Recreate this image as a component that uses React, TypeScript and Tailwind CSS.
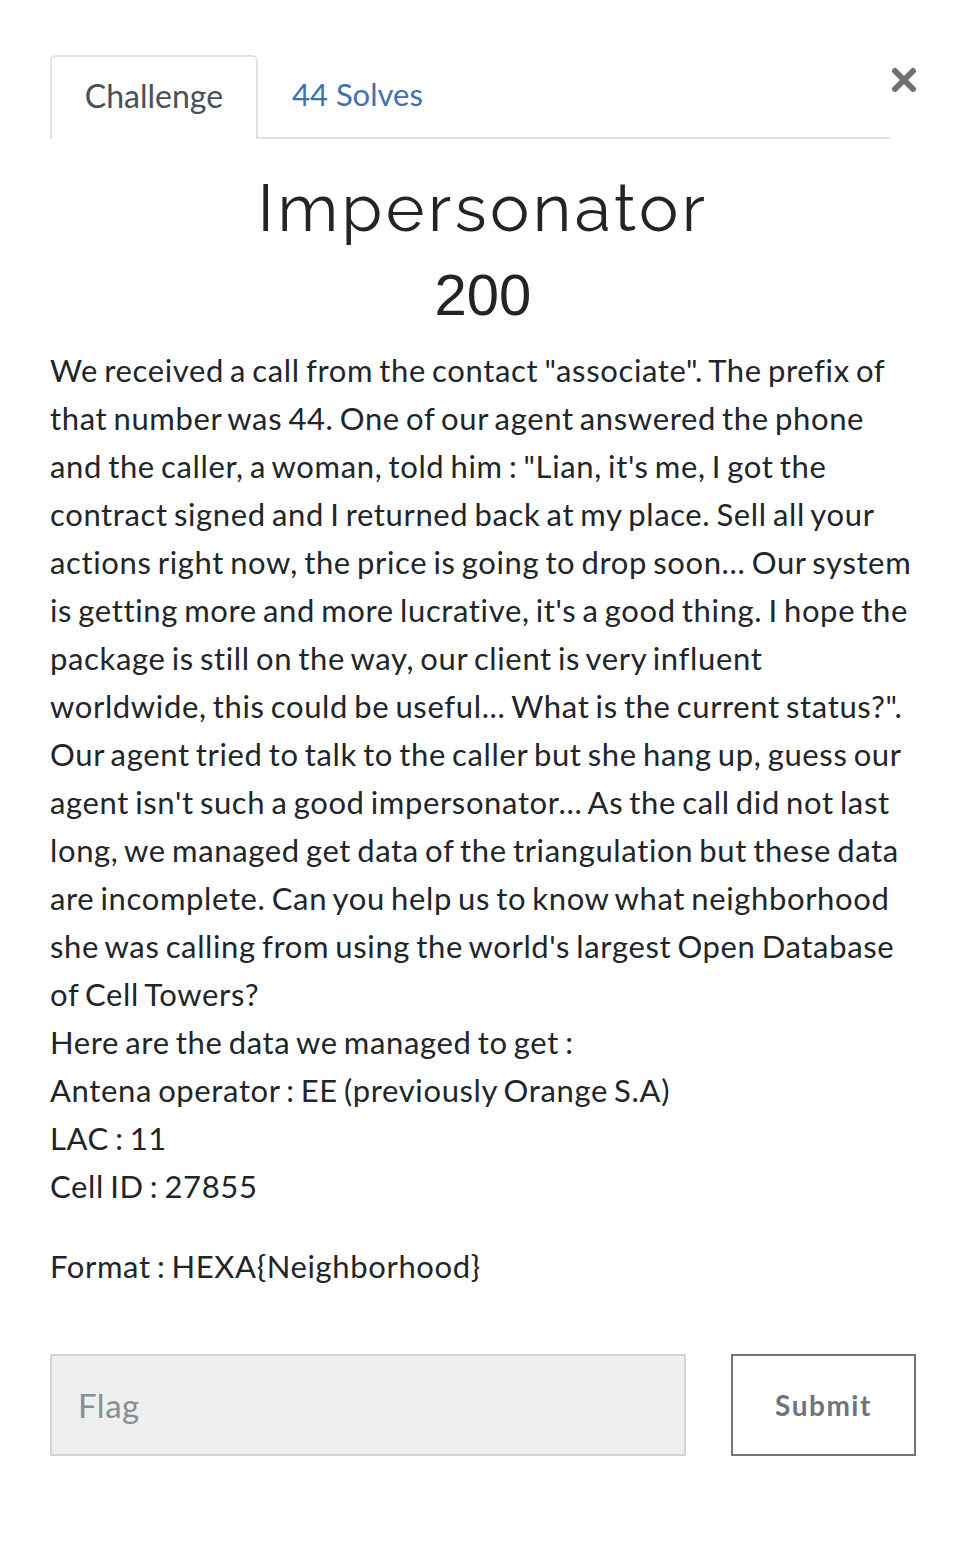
import { X } from "lucide-react";

const lines = [
  'We received a call from the contact "associate". The prefix of',
  "that number was 44. One of our agent answered the phone",
  'and the caller, a woman, told him : "Lian, it\'s me, I got the',
  "contract signed and I returned back at my place. Sell all your",
  "actions right now, the price is going to drop soon... Our system",
  "is getting more and more lucrative, it's a good thing. I hope the",
  "package is still on the way, our client is very influent",
  'worldwide, this could be useful... What is the current status?".',
  "Our agent tried to talk to the caller but she hang up, guess our",
  "agent isn't such a good impersonator... As the call did not last",
  "long, we managed get data of the triangulation but these data",
  "are incomplete. Can you help us to know what neighborhood",
  "she was calling from using the world's largest Open Database",
  "of Cell Towers?",
  "Here are the data we managed to get :",
  "Antena operator : EE (previously Orange S.A)",
  "LAC : 11",
  "Cell ID : 27855",
];

export default function App() {
  return (
    <div className="min-h-screen bg-white pl-[50px] pr-[50px] pt-[55px] font-['Lato','Noto_Sans',sans-serif] text-[#212529]">
      {/* 탭 + 닫기 */}
      <div className="flex items-start">
        <div className="flex w-[840px] shrink-0 border-b-2 border-[#dee2e6]">
          <div className="-mb-[2px] flex h-[84px] w-[208px] items-center justify-center rounded-t-md border-2 border-b-0 border-[#dee2e6] bg-white pb-1 text-[32px] text-[#495057]">
            Challenge
          </div>
          <div className="flex h-[82px] items-center px-[34px] pb-1 text-[31px] text-[#3e72ad]">
            44 Solves
          </div>
        </div>
        <button className="-ml-[4px] mt-[7px] shrink-0 text-[#6f6f6f]" aria-label="close">
          <X size={36} strokeWidth={4} />
        </button>
      </div>

      {/* 제목 + 점수 */}
      <h2 className="mt-[31px] text-center font-['Raleway','Lato',sans-serif] text-[66px] leading-[76px] tracking-[3.5px] font-normal">
        Impersonator
      </h2>
      <h3 className="mt-[14px] text-center font-['Liberation_Sans',Arial,sans-serif] text-[58px] leading-[70px]">
        200
      </h3>

      {/* 본문 */}
      <div className="mt-[16px] text-[31px] leading-[48px] tracking-[0.64px] [word-spacing:-2.4px]">
        <p>
          {lines.map((line, i) => (
            <span key={i} className="block whitespace-nowrap">
              {line}
            </span>
          ))}
        </p>
        <p className="mt-[32px]">Format : HEXA{"{"}Neighborhood{"}"}</p>
      </div>

      {/* 플래그 입력 */}
      <div className="mt-[64px] flex items-center">
        <input
          type="text"
          placeholder="Flag"
          className="h-[102px] w-[636px] border-2 border-[#ccd3d9] bg-[#efefef] px-[26px] text-[33px] tracking-[0.5px] text-[#495057] placeholder:text-[#868e96] focus:outline-none"
        />
        <button className="ml-auto h-[102px] w-[185px] border-2 border-[#6c757d] bg-white text-[28px] font-bold tracking-[1.5px] text-[#6c757d]">
          Submit
        </button>
      </div>
    </div>
  );
}
